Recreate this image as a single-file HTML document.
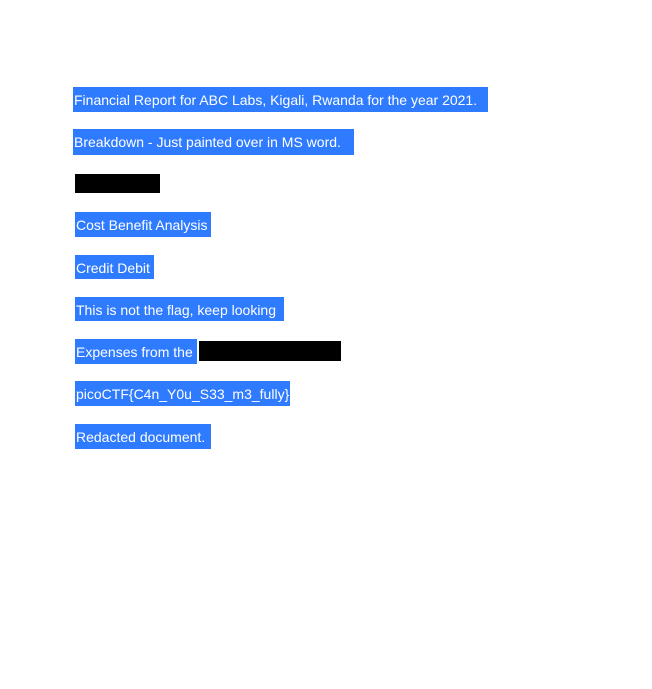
<!DOCTYPE html>
<html><head><meta charset="utf-8"><style>
html,body{margin:0;padding:0;background:#fff;width:652px;height:689px;overflow:hidden}
.b{position:absolute;background:#2f7bff;color:#fff;font-family:"Liberation Sans",sans-serif;font-size:14px;white-space:nowrap;overflow:hidden;box-sizing:border-box;padding-left:1px;padding-top:1px;line-height:25px}
.k{position:absolute;background:#000}
</style></head><body>
<div class="b" style="left:73px;top:87px;width:415px;height:25px">Financial Report for ABC Labs, Kigali, Rwanda for the year 2021.</div>
<div class="b" style="left:73px;top:129px;width:281px;height:26px">Breakdown - Just painted over in MS word.</div>
<div class="k" style="left:75px;top:174px;width:85px;height:19px"></div>
<div class="b" style="left:75px;top:212px;width:136px;height:25px">Cost Benefit Analysis</div>
<div class="b" style="left:75px;top:255px;width:79px;height:24px">Credit Debit</div>
<div class="b" style="left:75px;top:297px;width:209px;height:24px">This is not the flag, keep looking</div>
<div class="b" style="left:75px;top:339px;width:122px;height:25px">Expenses from the</div>
<div class="k" style="left:199px;top:341px;width:142px;height:20px"></div>
<div class="b" style="left:75px;top:381px;width:215px;height:25px">picoCTF{C4n_Y0u_S33_m3_fully}</div>
<div class="b" style="left:75px;top:424px;width:136px;height:25px">Redacted document.</div>
</body></html>
